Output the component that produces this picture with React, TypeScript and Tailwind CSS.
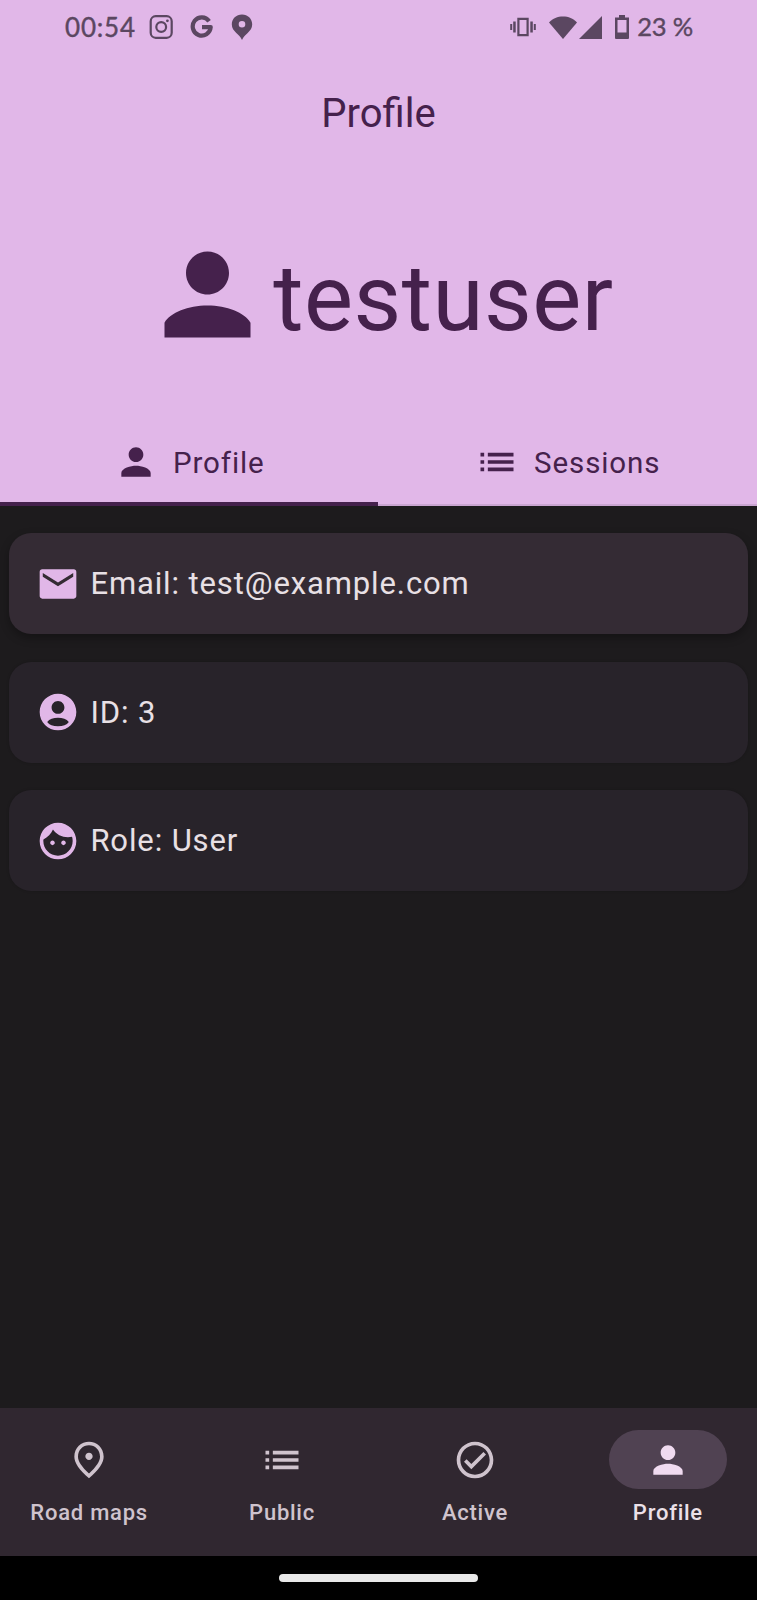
import React from "react";

const PERSON =
  "M12 12c2.21 0 4-1.79 4-4s-1.79-4-4-4-4 1.79-4 4 1.79 4 4 4zm0 2c-2.67 0-8 1.34-8 4v2h16v-2c0-2.66-5.33-4-8-4z";
const AVATAR =
  "M12 12c2.21 0 4-1.79 4-4s-1.79-4-4-4-4 1.79-4 4 1.79 4 4 4zM12 14.050c-3.600 0-6.900 1.300-8 3.200V20h16v-2.750c-1.100-1.900-4.400-3.200-8-3.200z";
const LIST =
  "M3 13h2v-2H3v2zm0 4h2v-2H3v2zm0-8h2V7H3v2zm4 4h14v-2H7v2zm0 4h14v-2H7v2zM7 7v2h14V7H7z";
const MAIL =
  "M20.600 4H3.400C2.600 4 2 4.600 2 5.400v13.200c0 .8.600 1.400 1.400 1.400h17.200c.8 0 1.400-.6 1.400-1.400V5.400c0-.8-.6-1.400-1.400-1.400zM20.300 8L12 13.200 3.700 8V6L12 11.200 20.300 6z";
const ACCOUNT =
  "M12 2C6.48 2 2 6.48 2 12s4.48 10 10 10 10-4.48 10-10S17.52 2 12 2zm0 4c1.93 0 3.5 1.57 3.5 3.5S13.93 13 12 13s-3.5-1.57-3.5-3.5S10.07 6 12 6zm0 13.800c-2.700 0-4.800-.8-5.900-2.400C7.300 15.900 9.500 15.200 12 15.200s4.700.7 5.900 2.200C16.800 19 14.700 19.800 12 19.800z";
const FACE =
  "M9 11.75c-.69 0-1.25.56-1.25 1.25s.56 1.25 1.25 1.25 1.25-.56 1.25-1.25-.56-1.25-1.25-1.25zm6 0c-.69 0-1.25.56-1.25 1.25s.56 1.25 1.25 1.25 1.25-.56 1.25-1.25-.56-1.25-1.25-1.25zM12 2C6.48 2 2 6.48 2 12s4.48 10 10 10 10-4.48 10-10S17.52 2 12 2zm0 18c-4.41 0-8-3.59-8-8 0-.29.02-.58.05-.86 2.36-1.05 4.23-2.98 5.21-5.37C11.07 8.33 14.05 10 17.42 10c.78 0 1.53-.09 2.25-.26.21.71.33 1.47.33 2.26 0 4.41-3.59 8-8 8z";
const PLACE =
  "M12 12c-1.1 0-2-.9-2-2s.9-2 2-2 2 .9 2 2-.9 2-2 2zm6-1.8C18 6.57 15.35 4 12 4s-6 2.57-6 6.2c0 2.34 1.95 5.44 6 9.14 4.05-3.7 6-6.8 6-9.14zM12 2c4.2 0 8 3.22 8 8.2 0 3.32-2.67 7.25-8 11.8-5.33-4.55-8-8.48-8-11.8C4 5.22 7.8 2 12 2z";
const CHECK =
  "M12 2C6.48 2 2 6.48 2 12s4.48 10 10 10 10-4.48 10-10S17.52 2 12 2zm0 18c-4.41 0-8-3.59-8-8s3.59-8 8-8 8 3.59 8 8-3.59 8-8 8zm4.59-12.42L10 14.17l-2.59-2.58L6 13l4 4 8-8z";

function Icon({ path, className }: { path: string; className: string }) {
  return (
    <svg viewBox="0 0 24 24" fill="currentColor" className={`shrink-0 ${className}`}>
      <path d={path} />
    </svg>
  );
}

function StatusBar() {
  return (
    <div className="flex h-[54px] items-center justify-between pl-[65px] pr-[64px] text-[#5b4761]">
      <div className="flex items-center">
        <span className="w-[84px] font-[Lato] text-[26px] leading-none tracking-[0.8px] [-webkit-text-stroke:0.4px_currentColor]">
          00:54
        </span>
        <svg viewBox="0 0 24 24" className="h-6 w-6" fill="none" stroke="currentColor" strokeWidth="2.2">
          <rect x="1.7" y="1.2" width="21" height="21.6" rx="5" />
          <circle cx="12.2" cy="12" r="4.9" />
          <circle cx="18.4" cy="5.8" r="1.4" fill="currentColor" stroke="none" />
        </svg>
        <svg viewBox="0 0 24 24" className="ml-[17px] h-6 w-6" fill="none" stroke="currentColor" strokeWidth="4.2">
          <path d="M19.1 6.2A9 9.200 0 1 0 20.700 12.200H12" strokeLinejoin="round" />
        </svg>
        <svg viewBox="0 0 22 26" className="ml-[17px] h-[26px] w-[22px]" fill="currentColor">
          <path
            fillRule="evenodd"
            d="M11 .5C5.200.5.800 4.800.800 10.300c0 4 2 6.200 4.500 8.600C7.500 21 9.500 22.500 11 26c1.500-3.500 3.500-5 5.700-7.100 2.500-2.400 4.500-4.600 4.500-8.600C21.200 4.800 16.800.5 11 .5zM11 7a3.300 3.300 0 1 1 0 6.600A3.300 3.300 0 0 1 11 7z"
          />
        </svg>
      </div>
      <div className="flex items-center">
        <svg viewBox="0 0 26 20" className="h-5 w-[26px]" fill="currentColor">
          <path
            fillRule="evenodd"
            d="M7.300 .8h11.400v18.400H7.300zM9.500 3v14h7V3zM3.200 4.500h2.500v11H3.200zM.2 7h2v6h-2zM20.300 4.500h2.500v11h-2.500zM23.800 7h2v6h-2z"
          />
        </svg>
        <svg viewBox="0 0 28 23" className="ml-[13px] h-[23px] w-7" fill="currentColor">
          <path d="M0 6.500C4 2.200 8.500.5 14 .5s10 1.700 14 6L14 23z" />
        </svg>
        <svg viewBox="0 0 23 23" className="ml-[2px] h-[23px] w-[23px]" fill="currentColor">
          <path d="M0 23L23 0v23z" />
        </svg>
        <svg viewBox="0 0 14 24" className="ml-[13px] h-6 w-[14px]" fill="currentColor">
          <path fillRule="evenodd" d="M4 0h6v2.500h4V23q0 1-1 1H1q-1 0-1-1V2.500h4zM2.500 5v12.500h9V5z" />
        </svg>
        <span className="ml-[8px] font-[Lato] text-[25.500px] leading-none tracking-[-0.3px] [word-spacing:0.5px] [-webkit-text-stroke:0.4px_currentColor]">
          23 %
        </span>
      </div>
    </div>
  );
}

function Card({ icon, text, raised }: { icon: string; text: string; raised?: boolean }) {
  return (
    <div
      className={`flex h-[101px] items-center rounded-[22px] pl-[27.4px] ${
        raised ? "bg-[#342b34] shadow-[0_4px_10px_rgba(0,0,0,0.3)]" : "bg-[#28232a] shadow-[0_0_3px_rgba(0,0,0,0.2)]"
      }`}
    >
      <Icon path={icon} className="h-[44px] w-[44px] text-[#e1b7e8]" />
      <span className="ml-[10px] text-[31px] leading-none tracking-[0.88px] text-[#e8e0e5]">{text}</span>
    </div>
  );
}

function NavItem({ icon, label, active }: { icon: string; label: string; active?: boolean }) {
  return (
    <div className={`flex flex-1 flex-col items-center ${active ? "text-[#ebe0e8]" : "text-[#cfc3cd]"}`}>
      <div
        className={`flex h-[59px] w-[118px] items-center justify-center rounded-full ${
          active ? "bg-[#504252] text-[#f0dbf0]" : ""
        }`}
      >
        <Icon path={icon} className="h-[44px] w-[44px]" />
      </div>
      <span className="mt-[9px] text-[22px] leading-[30px] font-medium tracking-[0.75px]">{label}</span>
    </div>
  );
}

export default function App() {
  return (
    <div className="flex h-[1600px] w-[757px] flex-col overflow-hidden bg-[#1d1b1d] font-[Roboto,sans-serif]">
      <header className="flex h-[506px] flex-col bg-[#e1b7e8] text-[#45214c]">
        <StatusBar />
        <h1 className="mt-[36px] text-center text-[40px] leading-[48px]">Profile</h1>
        <div className="mt-[91px] flex h-[130px] items-center justify-center">
          <Icon path={AVATAR} className="h-[129px] w-[129px]" />
          <span className="ml-px pt-[10px] text-[92.5px] leading-[108px] tracking-[0.5px]">testuser</span>
        </div>
        <div className="mt-auto flex h-[88px]">
          <div className="flex w-[378px] items-center justify-center border-b-4 border-[#45214c] pt-[3px] pl-px">
            <Icon path={PERSON} className="h-[44px] w-[44px]" />
            <span className="ml-[14.5px] pt-[4px] text-[29.500px] leading-none tracking-[0.9px]">Profile</span>
          </div>
          <div className="flex flex-1 items-center justify-center border-b-2 border-[#caa5d1] pt-px">
            <Icon path={LIST} className="h-[44px] w-[44px]" />
            <span className="ml-[15.5px] pt-[5px] text-[29.500px] leading-none tracking-[0.9px]">Sessions</span>
          </div>
        </div>
      </header>
      <main className="flex flex-1 flex-col gap-[27.5px] px-[9px] pt-[27px]">
        <Card icon={MAIL} text="Email: test@example.com" raised />
        <Card icon={ACCOUNT} text="ID: 3" />
        <Card icon={FACE} text="Role: User" />
      </main>
      <nav className="flex h-[148px] gap-[14.7px] bg-[#302730] pt-[22px]">
        <NavItem icon={PLACE} label="Road maps" />
        <NavItem icon={LIST} label="Public" />
        <NavItem icon={CHECK} label="Active" />
        <NavItem icon={PERSON} label="Profile" active />
      </nav>
      <div className="flex h-[44px] items-center justify-center bg-black">
        <div className="h-[8px] w-[199px] rounded-full bg-[#e9e9e9]" />
      </div>
    </div>
  );
}
